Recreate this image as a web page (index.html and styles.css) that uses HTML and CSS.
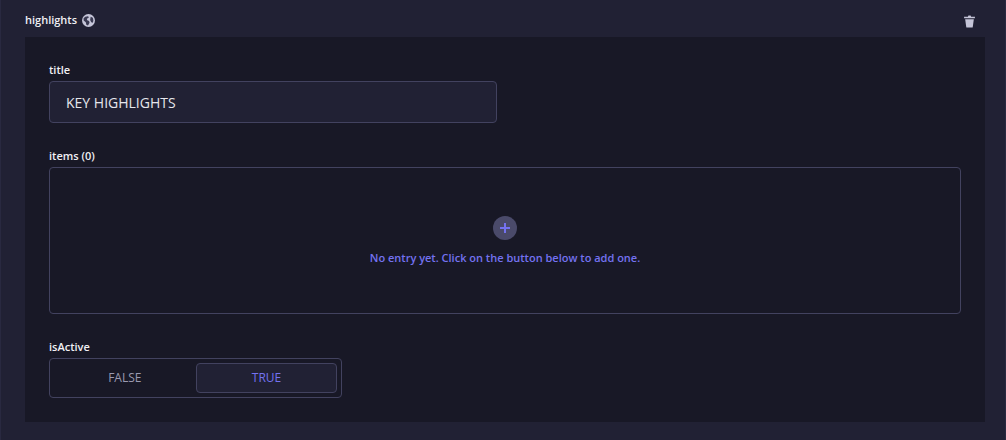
FILE: index.html
```html
<!DOCTYPE html>
<html lang="en">
<head>
<meta charset="utf-8">
<meta name="viewport" content="width=device-width, initial-scale=1">
<title>highlights</title>
<link rel="stylesheet" href="styles.css">
</head>
<body>
<main class="component">
  <header class="component-header">
    <h2 class="component-title">highlights
      <svg class="globe" viewBox="0 0 24 24" role="img" aria-label="Localized"><circle cx="12" cy="12" r="12" fill="currentColor"/><path class="land" d="M3 8l3-3 5-1 2 2-3 2-1 3 4 2 1 3-3 5-3-1-1-5-4-3zM16 5l4 2 1 5-1 4-3-1-2-4z"/></svg>
    </h2>
    <button class="delete" type="button" aria-label="Delete">
      <svg viewBox="0 0 24 24"><path fill="currentColor" d="M2 3h7l1-2h4l1 2h7v3H2zM4 8h16l-2 14q0 1-1 1H7q-1 0-1-1z"/></svg>
    </button>
  </header>
  <form class="panel">
    <div class="field half">
      <label class="label" for="title">title</label>
      <input class="text-input" id="title" type="text" value="KEY HIGHLIGHTS">
    </div>
    <div class="field full">
      <span class="label" id="items-label">items (0)</span>
      <button class="empty" type="button" aria-describedby="items-label">
        <svg class="plus" viewBox="0 0 24 24" aria-hidden="true"><circle cx="12" cy="12" r="12" fill="#4a4a6a"/><path d="M12 7v10M7 12h10" stroke="currentColor" stroke-width="2"/></svg>
        <span>No entry yet. Click on the button below to add one.</span>
      </button>
    </div>
    <fieldset class="field third">
      <legend class="label">isActive</legend>
      <div class="toggle">
        <label class="option"><input type="radio" name="isActive" value="false"><span>FALSE</span></label>
        <label class="option"><input type="radio" name="isActive" value="true" checked><span>TRUE</span></label>
      </div>
    </fieldset>
  </form>
</main>
</body>
</html>
```
FILE: styles.css
```css
* { box-sizing: border-box; }

body {
  margin: 0;
  min-height: 100vh;
  background: #212134;
  color: #f0f0f4;
  font: 11px/16px "Open Sans", "Noto Sans", sans-serif;
}

.component {
  min-height: 100vh;
  padding: 0 20px 18px 24px;
  border-left: 1px solid #292940;
  border-right: 1px solid #292940;
}

.component-header {
  display: flex;
  align-items: center;
  justify-content: space-between;
  height: 37px;
  padding: 3px 9px 0 0;
}

.component-title {
  display: flex;
  align-items: center;
  gap: 5px;
  margin: 0;
  font-size: 11px;
  font-weight: 600;
}

.globe { width: 13px; height: 13px; color: #c5c5d8; }
.land { fill: #3a3a52; }

.delete {
  display: flex;
  padding: 3px 0 0;
  border: 0;
  background: none;
  color: #c5c5d8;
}

.delete svg { width: 13px; height: 13px; }

.panel {
  display: grid;
  grid-template-columns: repeat(6, 1fr);
  gap: 25px 16px;
  padding: 25px 24px 24px;
  background: #181826;
}

.field {
  min-width: 0;
  margin: 0;
  padding: 0;
  border: 0;
}

.full { grid-column: span 6; }
.half { grid-column: 1 / span 3; }
.third { grid-column: span 2; }

.label {
  display: block;
  margin-bottom: 3px;
  padding: 0;
  font-weight: 600;
}

.text-input {
  display: block;
  width: 100%;
  height: 42px;
  padding: 0 16px;
  border: 1px solid #42425f;
  border-radius: 4px;
  background: #212134;
  color: #e6e6ec;
  font: inherit;
  font-size: 14px;
}

.empty {
  display: flex;
  flex-direction: column;
  align-items: center;
  justify-content: center;
  gap: 10px;
  width: 100%;
  min-height: 147px;
  padding: 0 16px;
  border: 1px solid #42425f;
  border-radius: 4px;
  background: none;
  color: #7472f0;
  font: inherit;
  font-weight: 600;
}

.plus { width: 24px; height: 24px; }

.toggle {
  display: grid;
  grid-template-columns: 1fr 1fr;
  height: 40px;
  padding: 4px;
  border: 1px solid #42425f;
  border-radius: 4px;
  font-size: 12px;
}

.option {
  display: flex;
  align-items: center;
  justify-content: center;
  border: 1px solid transparent;
  border-radius: 4px;
  color: #9a9ab0;
  font-weight: 500;
}

.option input {
  width: 0;
  height: 0;
  margin: 0;
  appearance: none;
}

.option:has(:checked) {
  border-color: #42425f;
  background: #212134;
  color: #7472f0;
}
```
